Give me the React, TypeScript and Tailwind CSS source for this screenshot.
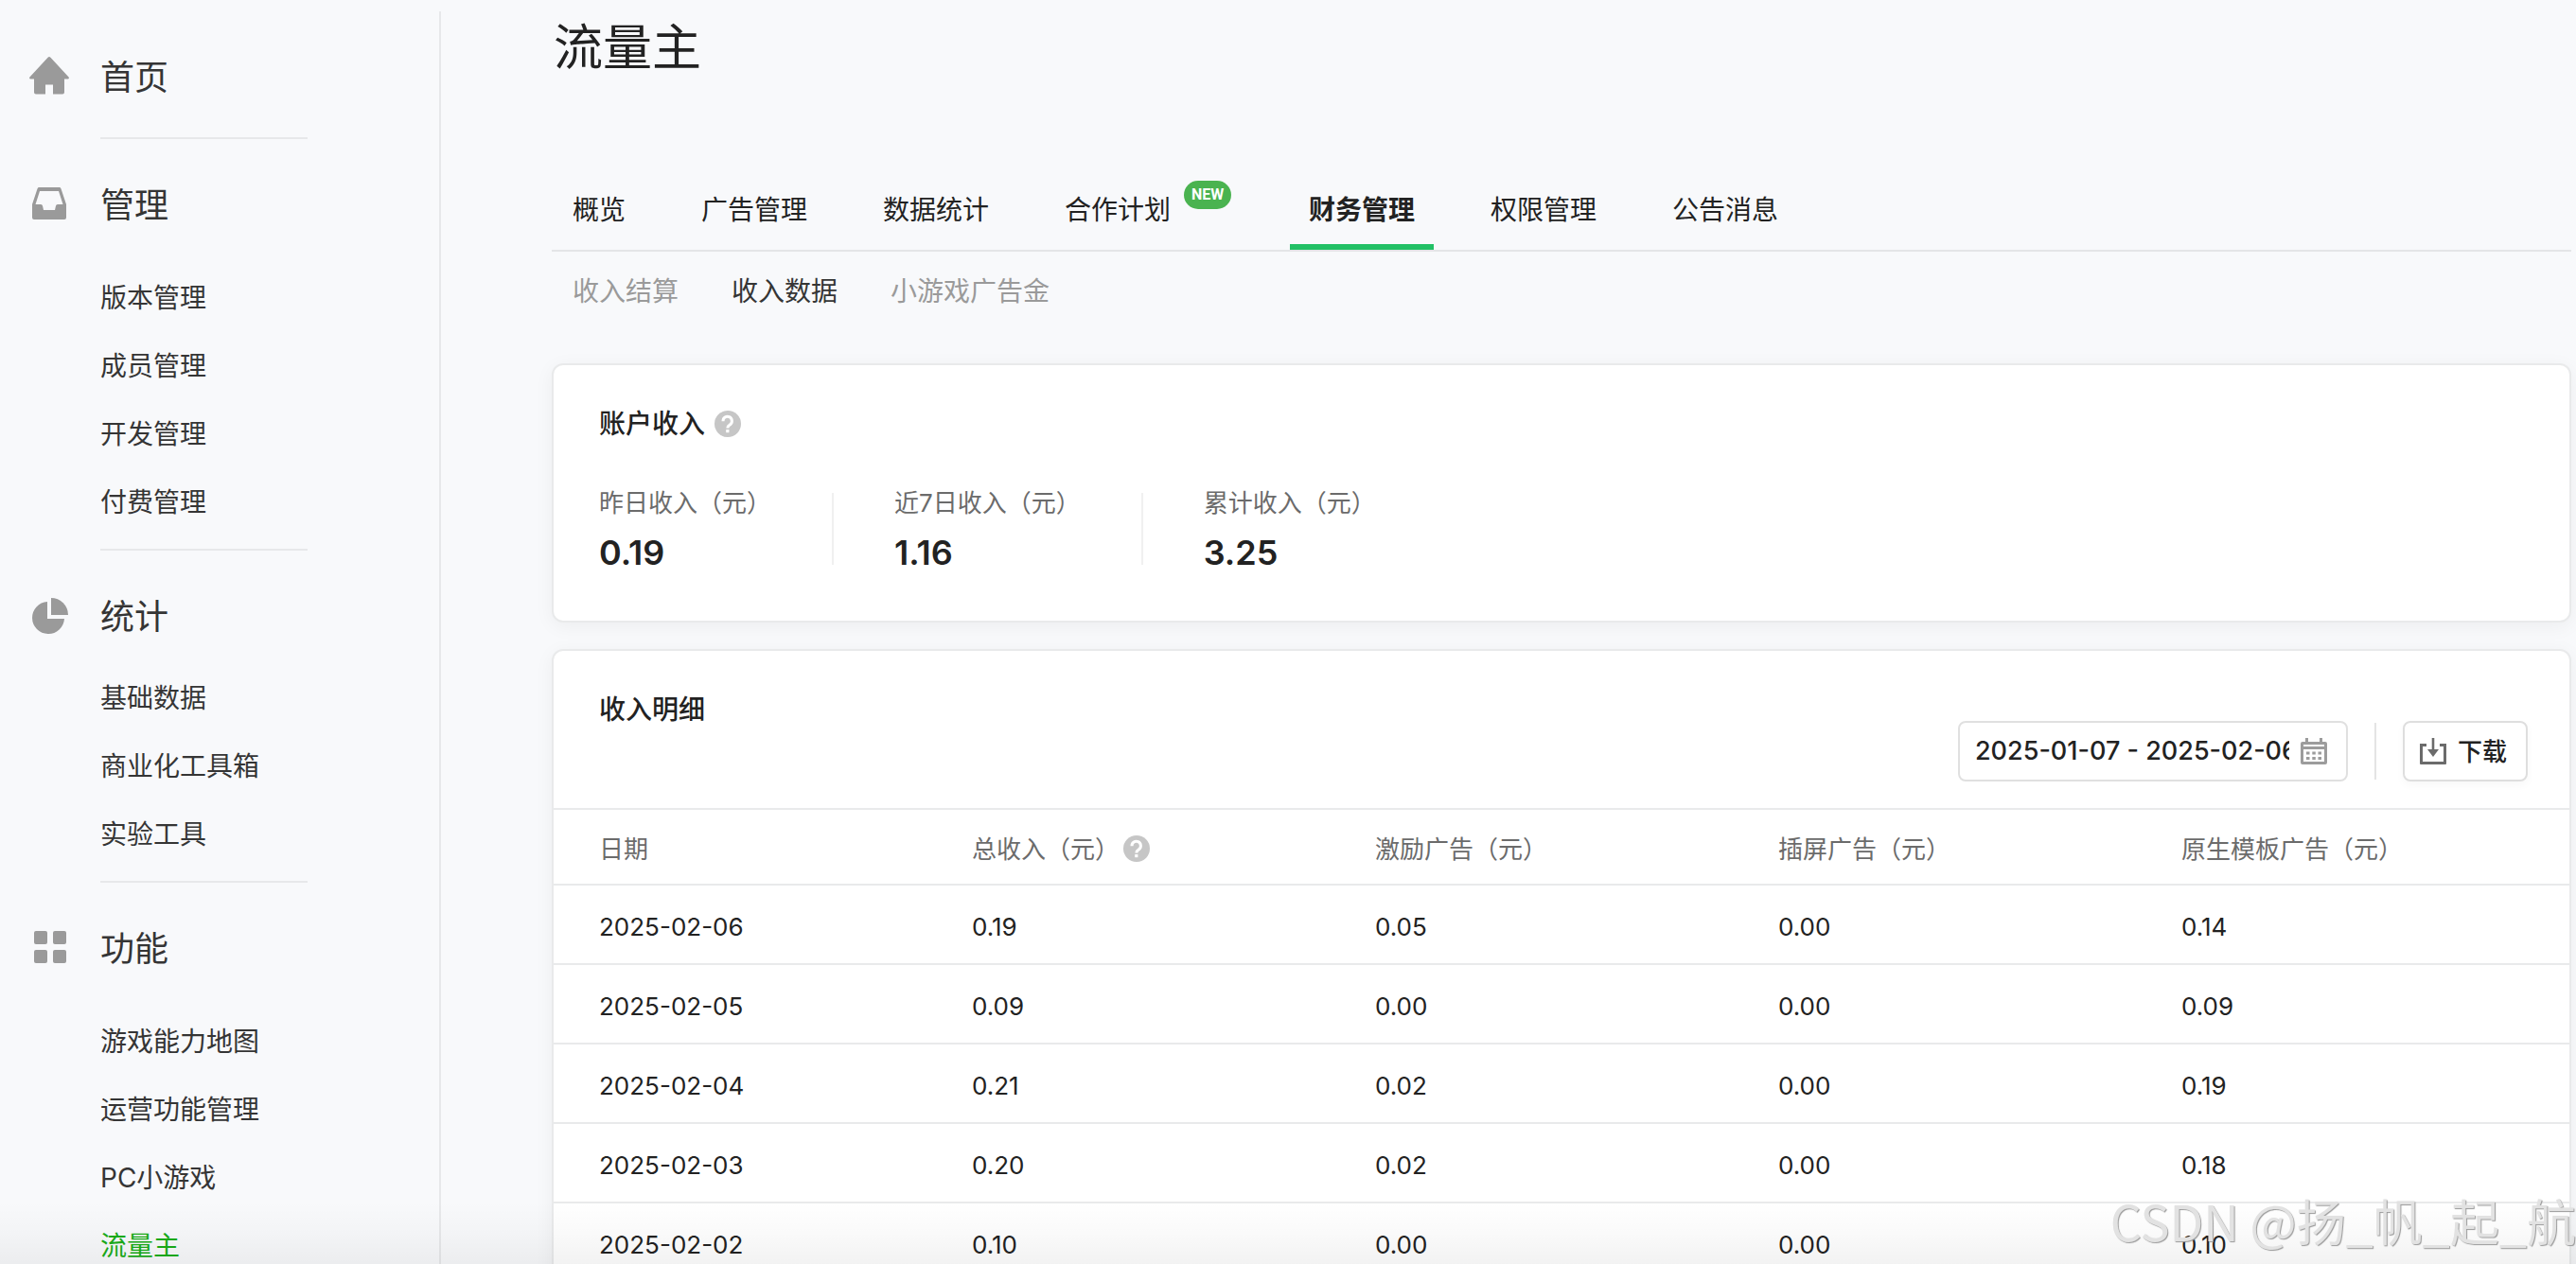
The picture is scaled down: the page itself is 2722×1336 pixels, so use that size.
import React from "react";

interface NavGroup {
  title: string;
  icon: React.ReactNode;
  items: string[];
  listClass?: string;
}

const HomeIcon = () => (
  <svg viewBox="0 0 48 48" className="w-12 h-12" fill="currentColor" aria-hidden="true">
    <path d="M22.6 3.7a2 2 0 0 1 2.8 0L44.6 24.4c.7.8.3 2-.8 2H40v14a2 2 0 0 1-2 2H28v-10h-8v10H10a2 2 0 0 1-2-2v-14H4.2c-1.1 0-1.5-1.2-.8-2z" />
  </svg>
);

const InboxIcon = () => (
  <svg viewBox="0 0 48 48" className="w-12 h-12" fill="currentColor" aria-hidden="true">
    <path
      fillRule="evenodd"
      d="M13.4 6h21.2a2 2 0 0 1 1.9 1.4L42 24v14a2 2 0 0 1-2 2H8a2 2 0 0 1-2-2V24L11.5 7.4A2 2 0 0 1 13.4 6zM14 10L9.500 24H15a2 2 0 0 1 2 1.600L18 30h12l1-4.400a2 2 0 0 1 2-1.600h5.500L34 10z"
    />
  </svg>
);

const PieIcon = () => (
  <svg viewBox="0 0 48 48" className="w-12 h-12" fill="currentColor" aria-hidden="true">
    <path d="M22 9v18h18a17 17 0 1 1-18-18z" />
    <path d="M26 5a18 18 0 0 1 18 18H26z" />
  </svg>
);

const GridIcon = () => (
  <svg viewBox="0 0 48 48" className="w-12 h-12" fill="currentColor" aria-hidden="true">
    <rect x="8" y="6" width="14" height="14" rx="2" />
    <rect x="28" y="6" width="14" height="14" rx="2" />
    <rect x="8" y="26" width="14" height="14" rx="2" />
    <rect x="28" y="26" width="14" height="14" rx="2" />
  </svg>
);

const HelpIcon = () => (
  <svg viewBox="0 0 28 28" className="w-7 h-7 shrink-0" aria-hidden="true">
    <circle cx="14" cy="14" r="14" fill="#c6c6c6" />
    <path d="M9 11.200a4.700 4.700 0 1 1 7.600 3.500c-1.700 1.200-2.800 1.900-2.800 3.800" fill="none" stroke="#fff" strokeWidth="3" />
    <rect x="12.200" y="20" width="3.200" height="3.200" fill="#fff" />
  </svg>
);

const CalendarIcon = () => (
  <svg viewBox="0 0 28 28" className="w-7 h-7 shrink-0" fill="#9c9c9c" aria-hidden="true">
    <path
      fillRule="evenodd"
      d="M5 0h3v4h12V0h3v4h3a2 2 0 0 1 2 2v20a2 2 0 0 1-2 2H2a2 2 0 0 1-2-2V6a2 2 0 0 1 2-2h3zM3 12v13h22V12zM3 7v2h22V7z"
    />
    <path d="M6 14.500h3.500v3H6zM12.300 14.500h3.500v3h-3.500zM18.500 14.500H22v3h-3.500zM6 20h3.500v3H6zM12.300 20h3.500v3h-3.500zM18.500 20H22v3h-3.500z" />
  </svg>
);

const DownloadIcon = () => (
  <svg viewBox="0 0 28 28" className="w-7 h-7 shrink-0" fill="#6b6b6b" aria-hidden="true">
    <path d="M0 6h7v3H3v16h22V9h-4V6h7v21a1 1 0 0 1-1 1H1a1 1 0 0 1-1-1z" />
    <path d="M12.700 0h2.600v12H20l-6 8-6-8h4.700z" />
  </svg>
);

const groups: NavGroup[] = [
  {
    title: "管理",
    icon: <InboxIcon />,
    items: ["版本管理", "成员管理", "开发管理", "付费管理"],
    listClass: "mt-[26px]",
  },
  {
    title: "统计",
    icon: <PieIcon />,
    items: ["基础数据", "商业化工具箱", "实验工具"],
    listClass: "mt-[14px]",
  },
  {
    title: "功能",
    icon: <GridIcon />,
    items: ["游戏能力地图", "运营功能管理", "PC小游戏", "流量主"],
    listClass: "mt-[26px]",
  },
];

const tabs = ["概览", "广告管理", "数据统计", "合作计划", "财务管理", "权限管理", "公告消息"];
const subTabs = ["收入结算", "收入数据", "小游戏广告金"];

const stats = [
  { label: "昨日收入（元）", value: "0.19" },
  { label: "近7日收入（元）", value: "1.16" },
  { label: "累计收入（元）", value: "3.25" },
];

const columns = ["日期", "总收入（元）", "激励广告（元）", "插屏广告（元）", "原生模板广告（元）"];

const rows = [
  ["2025-02-06", "0.19", "0.05", "0.00", "0.14"],
  ["2025-02-05", "0.09", "0.00", "0.00", "0.09"],
  ["2025-02-04", "0.21", "0.02", "0.00", "0.19"],
  ["2025-02-03", "0.20", "0.02", "0.00", "0.18"],
  ["2025-02-02", "0.10", "0.00", "0.00", "0.10"],
];

function NavHeading({ title, icon }: { title: string; icon: React.ReactNode }) {
  return (
    <a href="#" className="flex items-center h-[72px] pl-7 gap-[30px] text-4xl">
      <span className="text-[#9a9a9a]">{icon}</span>
      <span className="pt-0.5">{title}</span>
    </a>
  );
}

function Sidebar() {
  return (
    <aside className="w-[466px] shrink-0 mt-3 pt-[33px] border-r-2 border-[#e7e8ea] text-[#353535]">
      <nav>
        <NavHeading title="首页" icon={<HomeIcon />} />
        {groups.map((group, idx) => (
          <div key={group.title} className={idx === 0 ? "pt-7" : "pt-[14px]"}>
            <div className="ml-[106px] w-[219px] h-0.5 mb-[33px] bg-[#e7e8ea]" />
            <NavHeading title={group.title} icon={group.icon} />
            <ul className={group.listClass}>
              {group.items.map((item) => (
                <li key={item}>
                  <a
                    href="#"
                    className={`flex items-center h-[72px] pt-0.5 pl-[106px] text-[28px] ${
                      item === "流量主" ? "text-[#1aad19]" : ""
                    }`}
                  >
                    {item}
                  </a>
                </li>
              ))}
            </ul>
          </div>
        ))}
      </nav>
    </aside>
  );
}

function Tabs() {
  return (
    <>
      <nav className="flex gap-10 pl-0.5 mt-[90px] border-b-2 border-[#e4e5e7]">
        {tabs.map((tab) => (
          <a
            key={tab}
            href="#"
            className={`flex h-[88px] px-5 pt-[26px] text-[28px] leading-10 ${
              tab === "财务管理" ? "border-b-[6px] border-[#22c065] font-bold" : ""
            }`}
          >
            {tab}
            {tab === "合作计划" && (
              <span className="-mt-[11px] ml-3.5 mr-0.5 w-[50px] h-[30px] rounded-full bg-[#4ab350] text-white text-base leading-[30px] font-bold text-center font-['Roboto',sans-serif]">
                NEW
              </span>
            )}
          </a>
        ))}
      </nav>
      <nav className="flex gap-14 pl-[22px] mt-[22px] text-[28px] leading-10 text-[#9a9a9a]">
        {subTabs.map((tab) => (
          <a key={tab} href="#" className={tab === "收入数据" ? "text-[#353535]" : ""}>
            {tab}
          </a>
        ))}
      </nav>
    </>
  );
}

function AccountIncome() {
  return (
    <section className="mt-14 h-[274px] px-12 pt-[42px] bg-white border-2 border-[#e9eaeb] rounded-xl shadow-[0_4px_20px_rgba(0,0,0,0.05)]">
      <h2 className="flex items-center gap-2.5 text-[28px] leading-10 font-medium">
        账户收入
        <HelpIcon />
      </h2>
      <dl className="flex mt-11">
        {stats.map((stat, idx) => (
          <div key={stat.label} className="flex">
            {idx > 0 && <div className="w-0.5 h-[76px] mt-[9px] mx-16 bg-[#f0f0f0]" />}
            <div>
              <dt className="text-[26px] leading-10 text-[#6b6b6b]">{stat.label}</dt>
              <dd className="mt-2 text-4xl leading-[48px] font-semibold">{stat.value}</dd>
            </div>
          </div>
        ))}
      </dl>
    </section>
  );
}

function IncomeDetail() {
  return (
    <section className="mt-7 bg-white border-2 border-[#e9eaeb] rounded-xl shadow-[0_4px_20px_rgba(0,0,0,0.05)]">
      <div className="flex justify-between h-[166px] pl-12 pr-11">
        <h2 className="mt-[42px] text-[28px] leading-10 font-medium">收入明细</h2>
        <div className="flex items-center h-16 mt-[74px]">
          <label className="flex items-center w-[412px] h-16 pl-4 pr-5 gap-3 bg-white border-2 border-[#e0e0e0] rounded-lg">
            <input
              type="text"
              aria-label="日期范围"
              defaultValue="2025-01-07 - 2025-02-06"
              className="flex-1 min-w-0 text-[27px] font-medium outline-none"
            />
            <CalendarIcon />
          </label>
          <div className="w-0.5 h-[60px] mx-7 bg-[#e4e4e4]" />
          <button className="flex items-center h-16 pl-4 pr-5 gap-3 bg-white border-2 border-[#dedede] rounded-lg text-[26px] font-medium shadow-[0_4px_10px_rgba(0,0,0,0.03)]">
            <DownloadIcon />
            下载
          </button>
        </div>
      </div>
      <table className="w-full table-fixed text-[26px] text-left">
        <thead>
          <tr className="h-20 border-y-2 border-[#e9eaeb] text-[#6b6b6b]">
            {columns.map((col, idx) => (
              <th key={col} className="pt-1 pl-4 first:pl-12 font-normal">
                <span className="flex items-center gap-1">
                  {col}
                  {idx === 1 && <HelpIcon />}
                </span>
              </th>
            ))}
          </tr>
        </thead>
        <tbody>
          {rows.map((row) => (
            <tr key={row[0]} className="h-[84px] border-b-2 border-[#e9eaeb]">
              {row.map((cell, idx) => (
                <td key={idx} className="pt-1 pl-4 first:pl-12">
                  {cell}
                </td>
              ))}
            </tr>
          ))}
        </tbody>
      </table>
    </section>
  );
}

export default function App() {
  return (
    <div className="relative flex h-screen overflow-hidden bg-[#f8f9fb] text-[#222] font-['Inter','Noto_Sans_CJK_SC',sans-serif]">
      <Sidebar />
      <main className="flex-1 min-w-0 pl-[117px] pr-[5px]">
        <h1 className="pt-4 pl-0.5 text-[52px] leading-[70px]">流量主</h1>
        <Tabs />
        <AccountIncome />
        <IncomeDetail />
      </main>

      {/* Bottom fade */}
      <div className="absolute inset-x-0 bottom-0 h-[66px] pointer-events-none bg-linear-to-t from-black/5 via-black/2 to-transparent" />

      {/* Watermark */}
      <div className="absolute right-0 bottom-4 text-[52px] leading-[60px] whitespace-nowrap pointer-events-none text-[#e2e2e2] font-['Noto_Sans_CJK_SC',sans-serif] [text-shadow:1px_1px_1px_#999]">
        CSDN @扬_帆_起_航
      </div>
    </div>
  );
}
